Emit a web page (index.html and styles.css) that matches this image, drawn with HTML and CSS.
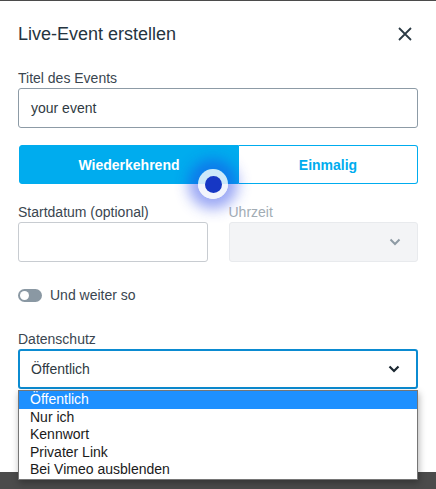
FILE: index.html
```html
<!DOCTYPE html>
<html lang="de">
<head>
<meta charset="utf-8">
<title>Live-Event erstellen</title>
<link rel="stylesheet" href="styles.css">
</head>
<body>
<div class="modal">
  <div class="header">
    <h1 class="title">Live-Event erstellen</h1>
    <svg class="close" width="14" height="14" viewBox="0 0 14 14"><path d="M1 1 L13 13 M13 1 L1 13" stroke="#2b3a45" stroke-width="1.8" fill="none"/></svg>
  </div>

  <label class="label first">Titel des Events</label>
  <div class="input dark">your event</div>

  <div class="segmented">
    <div class="seg active">Wiederkehrend</div>
    <div class="seg">Einmalig</div>
    <div class="focus-dot"><span></span></div>
  </div>

  <div class="row">
    <div class="col">
      <label class="label">Startdatum (optional)</label>
      <div class="input light"></div>
    </div>
    <div class="col">
      <label class="label muted">Uhrzeit</label>
      <div class="input disabled">
        <svg class="chev" width="12" height="8" viewBox="0 0 12 8"><path d="M1.5 1.5 L6 6 L10.5 1.5" stroke="#8e9ba5" stroke-width="2" fill="none"/></svg>
      </div>
    </div>
  </div>

  <div class="toggle-row">
    <span class="toggle"><span class="knob"></span></span>
    <span class="toggle-label">Und weiter so</span>
  </div>

  <label class="label privacy">Datenschutz</label>
  <div class="select-wrap">
    <div class="input focused">Öffentlich
      <svg class="chev" width="12" height="8" viewBox="0 0 12 8"><path d="M1.5 1.5 L6 6 L10.5 1.5" stroke="#1b2832" stroke-width="2.2" fill="none"/></svg>
    </div>
    <ul class="options">
      <li class="selected">Öffentlich</li>
      <li>Nur ich</li>
      <li>Kennwort</li>
      <li>Privater Link</li>
      <li>Bei Vimeo ausblenden</li>
    </ul>
  </div>
</div>
</body>
</html>
```

FILE: styles.css
```css
* { box-sizing: border-box; }
html, body { margin: 0; padding: 0; }
body {
  background: #4b4b4b;
  width: 436px;
  height: 489px;
  overflow: hidden;
  font-family: "Liberation Sans", Arial, sans-serif;
  color: #3a4650;
}
.modal {
  margin-top: 1px;
  height: 471px;
  background: #fff;
  padding: 21px 18px 0 18px;
  position: relative;
}
.header {
  display: flex;
  align-items: center;
  justify-content: space-between;
  height: 24px;
}
.title {
  margin: 0;
  font-size: 18px;
  font-weight: normal;
  color: #25343f;
  line-height: 24px;
}
.close { margin-right: 6px; }
.label {
  display: block;
  font-size: 14px;
  line-height: 18px;
  height: 18px;
  color: #3a4650;
  margin-bottom: 1px;
}
.label.first { margin-top: 23px; }
.label.muted { color: #a2acb4; }
.input {
  height: 40px;
  border-radius: 3px;
  display: flex;
  align-items: center;
  padding: 0 12px;
  font-size: 14px;
  color: #2f3a42;
  position: relative;
}
.input.dark { border: 1px solid #8d9ba6; }
.input.light { border: 1px solid #c8ccd1; }
.input.disabled { background: #f3f4f6; border: 1px solid #e8eaed; }
.input.focused { border: 2px solid #0b8bd1; padding-left: 11px; }
.chev { position: absolute; right: 16px; top: 50%; margin-top: -4px; }
.segmented {
  margin-top: 17px;
  margin-left: 1px;
  display: flex;
  height: 39px;
  position: relative;
}
.seg {
  display: flex;
  align-items: center;
  justify-content: center;
  font-size: 14px;
  font-weight: bold;
  color: #00acee;
  border: 1px solid #00acee;
  border-left: none;
  border-radius: 0 3px 3px 0;
  flex: 1;
}
.seg.active {
  flex: 0 0 220px;
  background: #00acee;
  color: #fff;
  border-radius: 3px 0 0 3px;
  border-left: 1px solid #00acee;
}
.focus-dot {
  position: absolute;
  left: 179px;
  top: 24px;
  width: 30px;
  height: 30px;
  border-radius: 50%;
  background: rgba(240, 242, 252, 0.85);
  box-shadow: 0 0 14px 10px rgba(30, 60, 230, 0.45);
  display: flex;
  align-items: center;
  justify-content: center;
}
.focus-dot span {
  width: 17px;
  height: 17px;
  border-radius: 50%;
  background: #1637c4;
}
.row {
  display: flex;
  gap: 21px;
  margin-top: 19px;
}
.col { flex: 1; }
.toggle-row {
  display: flex;
  align-items: center;
  height: 18px;
  margin-top: 24px;
}
.toggle {
  width: 24px;
  height: 13px;
  border-radius: 7px;
  background: #8a98a3;
  display: flex;
  align-items: center;
  padding-left: 2px;
}
.knob {
  width: 9px;
  height: 9px;
  border-radius: 50%;
  background: #fff;
}
.toggle-label {
  margin-left: 8px;
  font-size: 14px;
  color: #3a4650;
}
.label.privacy { margin-top: 26px; }
.select-wrap { position: relative; }
.options {
  position: absolute;
  left: 0;
  right: 0;
  top: 41px;
  margin: 0;
  padding: 0;
  list-style: none;
  background: #fff;
  border: 1px solid #767676;
  box-shadow: 1px 3px 7px rgba(0, 0, 0, 0.3);
  z-index: 2;
}
.options li {
  height: 17.5px;
  line-height: 17.5px;
  padding-left: 11px;
  font-size: 14px;
  color: #1a1a1a;
}
.options li.selected {
  background: #1e90ff;
  color: #fff;
}
```
